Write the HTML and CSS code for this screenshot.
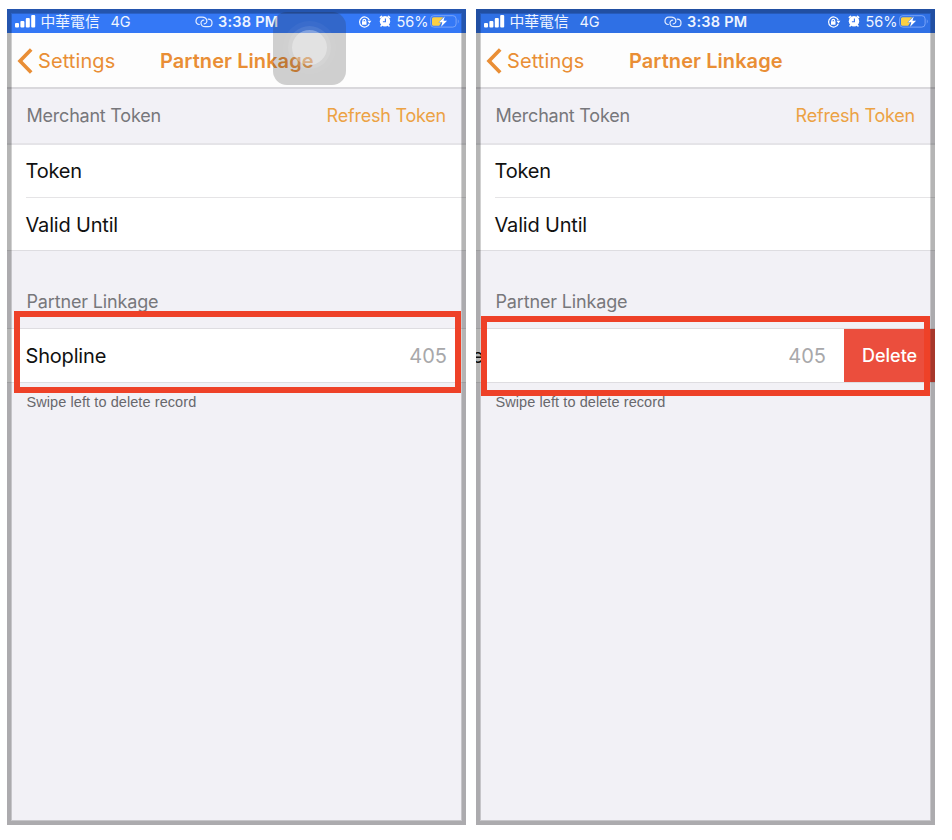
FILE: index.html
```
<!DOCTYPE html>
<html lang="en">
<head>
<meta charset="utf-8">
<title>Partner Linkage</title>
<link rel="stylesheet" href="styles.css">
</head>
<body>
<svg class="defs" width="0" height="0">
  <symbol id="signal" viewBox="0 0 21 13"><g fill="#fff"><rect x="0" y="8" width="4" height="4.500" rx="1"/><rect x="5.400" y="6" width="4" height="6.500" rx="1"/><rect x="10.800" y="3" width="4" height="9.500" rx="1"/><rect x="16.200" y="0" width="4" height="12.500" rx="1"/></g></symbol>
  <symbol id="link" viewBox="0 0 18 12"><g fill="none" stroke="#e4edff" stroke-width="1.200" stroke-linecap="round"><path d="M4.300 8.500C2.200 8.200 1 6.800 1 4.900 1 2.800 2.500 1.200 4.600 1.200h2.800c2.200 0 3.900 1.300 4.400 3.100C12.200 6.200 11 7.800 9.200 7.800"/><path d="M13.200 3.200C15.400 3.300 17 4.800 17 6.900 17 9.100 15.400 10.700 13.300 10.700h-3C8 10.700 6.200 9.300 6 7.300 5.800 5.500 7 4.100 8.800 4.100"/></g></symbol>
  <symbol id="lock" viewBox="0 0 14 12"><g fill="none" stroke="#fff" stroke-width="1.200"><path d="M11.300 7.700A5 5 0 1 1 11.300 4.300"/><path d="M4.900 5.500V4.700a1.400 1.400 0 0 1 2.800 0v.8"/></g><path fill="#fff" d="M4 5.200h4.500v3.600H4zM9.400 4.800h4L11.500 7.600z"/></symbol>
  <symbol id="alarm" viewBox="0 0 12 12"><circle cx="6" cy="6.200" r="5.200" fill="#fff"/><path d="M1.400 2.400 2.600 1.400M10.600 2.400 9.400 1.400M2.700 10.200 2 11M9.300 10.200 10 11" stroke="#fff" stroke-width="1.600" stroke-linecap="round"/><path d="M6.400 3.500V6.700H3.900" fill="none" stroke="#3573ef" stroke-width="1.100"/></symbol>
  <symbol id="battery" viewBox="0 0 30 13"><rect x=".6" y=".7" width="25.500" height="11.400" rx="3.200" fill="none" stroke="#79a4f8" stroke-width="1"/><path d="M27.800 4.300q2 2.200 0 4.400z" fill="#6e9bf5"/><path d="M3.500 2.200h9.700L8.500 7.500h2.700L9.200 10.800H3.500Q2 10.800 2 9.300V3.700Q2 2.200 3.500 2.200z" fill="#fbcf43"/><path d="M14.700 1.600 8.900 7.200h3.400l-1.200 4.500 6-6h-3.600z" fill="#fff"/></symbol>
  <symbol id="back" viewBox="0 0 16 26"><path d="M14.200 1.500 3 13 14.200 24.500" fill="none" stroke="#e98e35" stroke-width="3.600"/></symbol>
</svg>
<main class="screens">
  <section class="phone">
    <div class="status">
      <svg class="signal"><use href="#signal"/></svg><span class="carrier">中華電信</span><span class="network">4G</span>
      <svg class="link"><use href="#link"/></svg><span class="time">3:38 PM</span>
      <svg class="lock"><use href="#lock"/></svg><svg class="alarm"><use href="#alarm"/></svg><span class="percent">56%</span><svg class="battery"><use href="#battery"/></svg>
    </div>
    <header class="nav"><svg class="back"><use href="#back"/></svg><span class="settings">Settings</span><span class="title">Partner Linkage</span></header>
    <div class="section"><span class="merchant">Merchant Token</span><span class="refresh">Refresh Token</span></div>
    <div class="row divided"><span class="token">Token</span></div>
    <div class="row last"><span class="valid">Valid Until</span></div>
    <div class="group"><span class="partner">Partner Linkage</span></div>
    <div class="row record"><span class="shop">Shopline</span><span class="count">405</span></div>
    <p class="hint"><span>Swipe left to delete record</span></p>
    <div class="touch"><i></i></div>
    <div class="frame"></div>
    <div class="highlight"></div>
  </section>
  <section class="phone second">
    <div class="status">
      <svg class="signal"><use href="#signal"/></svg><span class="carrier">中華電信</span><span class="network">4G</span>
      <svg class="link"><use href="#link"/></svg><span class="time">3:38 PM</span>
      <svg class="lock"><use href="#lock"/></svg><svg class="alarm"><use href="#alarm"/></svg><span class="percent">56%</span><svg class="battery"><use href="#battery"/></svg>
    </div>
    <header class="nav"><svg class="back"><use href="#back"/></svg><span class="settings">Settings</span><span class="title">Partner Linkage</span></header>
    <div class="section"><span class="merchant">Merchant Token</span><span class="refresh">Refresh Token</span></div>
    <div class="row divided"><span class="token">Token</span></div>
    <div class="row last"><span class="valid">Valid Until</span></div>
    <div class="group"><span class="partner">Partner Linkage</span></div>
    <div class="row record swiped"><span class="tail">e</span><span class="count">405</span><span class="delete"><b>Delete</b></span></div>
    <p class="hint"><span>Swipe left to delete record</span></p>
    <div class="frame"></div>
    <div class="highlight"></div>
  </section>
</main>
</body>
</html>
```

FILE: styles.css
```
* { box-sizing: border-box; }
body { margin: 0; background: #fff; font-family: Inter, "Noto Sans CJK TC", sans-serif; }
.defs { display: block; }
.screens { display: flex; gap: 10px; padding: 9px 0 0 7px; }
.phone { position: relative; width: 459px; height: 816px; overflow: hidden; background: #f2f1f6; white-space: nowrap; }
svg { flex: none; }
.status { display: flex; align-items: center; height: 24px; padding-top: 2px; background: #3478f6; color: #eef4ff; font-size: 14.5px; line-height: 22px; }
.second .status { background: #2f70e5; }
.signal { width: 21px; height: 13px; margin-left: 8px; margin-top: -2px; }
.carrier { width: 60px; margin-left: 4.5px; font-size: 14.8px; }
.network { width: 20px; margin-left: 10px; }
.link { width: 18px; height: 12px; margin-left: 64.5px; }
.time { width: 61px; margin-left: 5px; font-weight: 600; letter-spacing: .25px; }
.lock { width: 14px; height: 12px; margin-left: 79px; }
.alarm { width: 12px; height: 12px; margin-left: 7px; margin-top: -2px; }
.percent { width: 31px; margin-left: 5.5px; }
.battery { width: 30px; height: 13px; margin-left: 2.5px; margin-top: -1px; }
.nav { display: flex; align-items: center; height: 56px; padding-top: 1px; background: #fdfdfd; border-bottom: 2px solid #d9d8dc; color: #e98e35; font-size: 20px; }
.back { width: 16px; height: 26px; margin-left: 10px; }
.settings { width: 77px; margin-left: 5px; letter-spacing: .1px; }
.title { margin-left: 45px; font-weight: 600; letter-spacing: .07px; }
.section { display: flex; justify-content: space-between; align-items: center; height: 56px; padding: 0 20px 1px 19.5px; border-bottom: 2px solid #e5e4e8; color: #77777b; font-size: 18px; letter-spacing: -.22px; }
.refresh { color: #eca244; }
.row { display: flex; align-items: center; height: 53px; padding: 0 19px 0 18.5px; background: #fff; color: #111; font-size: 20px; letter-spacing: -.18px; }
.divided { height: 52px; }
.divided + .row { height: 54px; padding-top: 2px; background: linear-gradient(#e5e4e6, #e5e4e6) 19px 0 / 100% 1px no-repeat #fff; }
.last { border-bottom: 1px solid #dedde1; }
.group { display: flex; align-items: flex-end; height: 77px; padding: 0 20px 16px 19.5px; color: #77777b; font-size: 18px; letter-spacing: -.15px; }
.record { height: 55px; justify-content: space-between; border: solid #dedde1; border-width: 1px 0; }
.count { color: #a8a8aa; letter-spacing: 0; }
.hint { margin: 10px 19.5px; color: #68686c; font: 14.5px/18px "Liberation Sans", sans-serif; letter-spacing: .08px; }
.swiped { padding: 0; }
.swiped .tail { width: 10px; margin-left: -4px; }
.swiped .count { margin-left: auto; margin-right: 18px; }
.delete { display: flex; align-items: center; align-self: stretch; width: 91px; padding-left: 18px; background: #eb4e3d; color: #fff; font-size: 18px; letter-spacing: 0; }
.delete b { font-weight: 500; }
.frame { position: absolute; inset: 0; border: 4px solid rgba(0,0,0,.29); }
.frame::after { content: ""; position: absolute; inset: 0; border: 1px solid rgba(0,0,0,.18); }
.highlight { position: absolute; left: 7px; top: 302px; width: 447px; height: 82px; border: 6px solid #ee4128; }
.second .highlight { left: 5px; top: 307px; width: 449px; height: 80px; }
.touch { position: absolute; left: 266px; top: 3px; width: 73px; height: 73px; border-radius: 14px; background: rgba(45,45,45,.22); }
.touch i { position: absolute; left: 19px; top: 18px; width: 35px; height: 35px; border-radius: 50%; background: rgba(255,255,255,.4); box-shadow: 0 0 0 4px rgba(255,255,255,.09), 0 0 0 9px rgba(255,255,255,.04); }
```
